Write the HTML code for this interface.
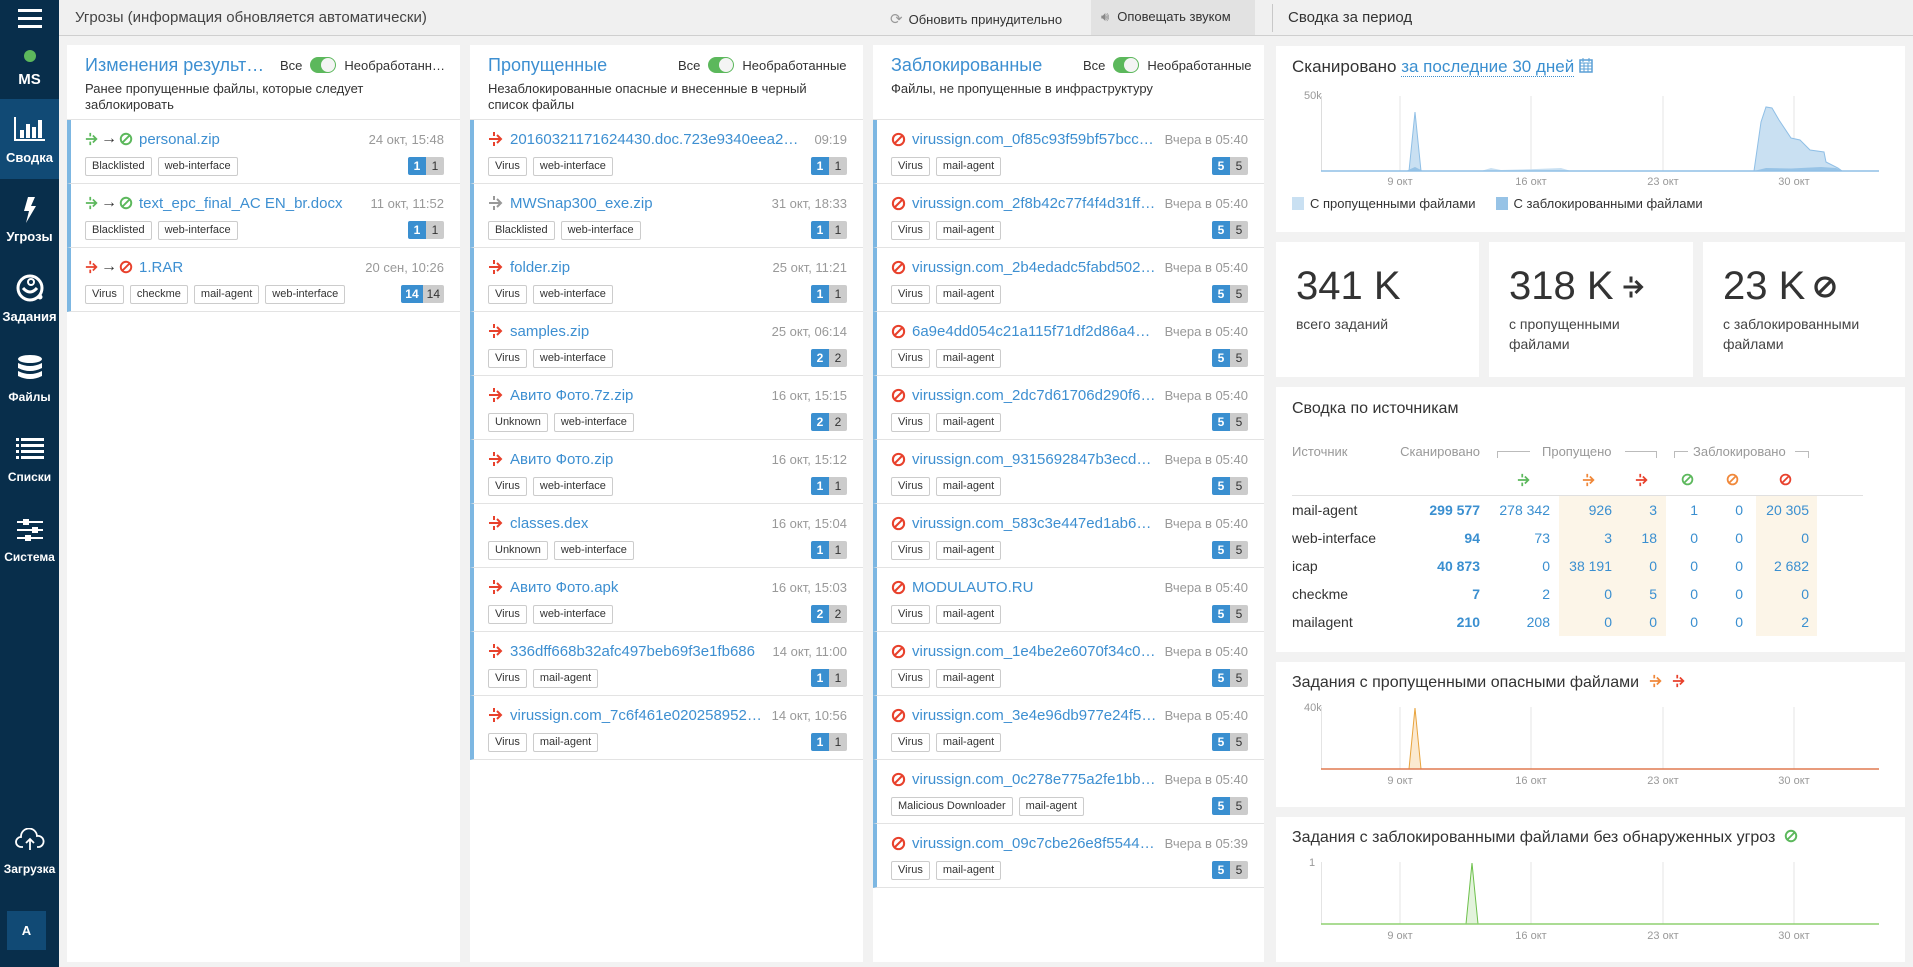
<!DOCTYPE html>
<html><head><meta charset="utf-8">
<style>
*{box-sizing:border-box;margin:0;padding:0}
body{width:1913px;height:967px;overflow:hidden;background:#f2f2f2;font-family:"Liberation Sans",sans-serif;position:relative;color:#333}
.abs{position:absolute}
#side{left:0;top:0;width:59px;height:967px;background:#082e4b;color:#fff;font-weight:bold;font-size:12px;text-align:center}
.nav{position:absolute;left:0;width:59px;text-align:center}
#hdr{left:59px;top:0;width:1854px;height:36px;background:#f0f0f0;border-bottom:1px solid #cfcfcf}
.col{background:#fff;top:45px;height:917px}
.ch{position:absolute;left:18px;top:10px;font-size:18px;color:#3d8fd1;white-space:nowrap;overflow:hidden;text-overflow:ellipsis}
.tg{position:absolute;top:12px;font-size:13px;color:#333;display:flex;align-items:center}
.sw{width:26px;height:16px;border-radius:8px;background:#5cb85c;margin:0 8px;position:relative}
.sw:after{content:"";position:absolute;right:1px;top:1px;width:14px;height:14px;border-radius:7px;background:#f4f4f4}
.desc{position:absolute;left:18px;top:36px;font-size:13px;line-height:16px;color:#333}
.list{position:absolute;left:0;right:0;top:74px;border-top:1px solid #e3e3e3}
.it{height:64px;border-bottom:1px solid #e3e3e3;border-left:4px solid #7db7e2;position:relative}
.r1{position:absolute;left:14px;right:16px;top:9px;height:20px;display:flex;align-items:center}
.nm{font-size:15px;color:#3d8fd1;white-space:nowrap;overflow:hidden;text-overflow:ellipsis;flex:1;margin-left:6px}
.tm{font-size:13px;color:#999;white-space:nowrap;margin-left:8px}
.r2{position:absolute;left:14px;right:16px;top:36px;height:20px;display:flex;align-items:center}
.tag{font-size:11px;border:1px solid #ccc;border-radius:2px;height:19px;line-height:17px;padding:0 6px;margin-right:6px;color:#333}
.bd{margin-left:auto;display:flex;font-size:12px;height:18px;line-height:18px;border-radius:2px;overflow:hidden}
.bd b{background:#3a8fd0;color:#fff;font-weight:bold;padding:0 4px;min-width:18px;text-align:center}
.bd i{background:#ccc;color:#333;font-style:normal;padding:0 4px;min-width:18px;text-align:center}
.card{background:#fff;position:absolute}
.ct{position:absolute;left:16px;font-size:16px;color:#333}
.xl{position:absolute;font-size:11px;color:#999;transform:translateX(-50%)}
.num{position:absolute;left:20px;top:22px;font-size:40px;color:#333;display:flex;align-items:center}
.stl{position:absolute;left:20px;top:72px;font-size:14px;line-height:20px;color:#444}
.row{position:absolute;left:1292px;height:28px;display:flex;align-items:center;font-size:14px}
.row span{display:block;text-align:right;color:#3a8fd0}
.row span:first-child{text-align:left;color:#333}
.ar{margin:0 2px;font-size:16px}
</style></head><body>
<svg width="0" height="0" style="position:absolute">
<defs>
<symbol id="pass" viewBox="0 0 16 16"><path d="M6 1v4M6 11v4" stroke="currentColor" stroke-width="2"/><path d="M1 8h12M9 4l4 4-4 4" stroke="currentColor" stroke-width="2" fill="none"/></symbol>
<symbol id="blk" viewBox="0 0 16 16"><circle cx="8" cy="8" r="6" stroke="currentColor" stroke-width="2.2" fill="none"/><path d="M4 12L12 4" stroke="currentColor" stroke-width="2.2"/></symbol>
</defs></svg>

<div id="side" class="abs">
 <div class="nav" style="top:9px"><div style="width:24px;height:3px;background:#fff;margin:0 auto 5px"></div><div style="width:24px;height:3px;background:#fff;margin:0 auto 5px"></div><div style="width:24px;height:3px;background:#fff;margin:0 auto"></div></div>
 <div class="nav" style="top:50px"><div style="width:12px;height:12px;border-radius:6px;background:#5cb85c;margin:0 auto"></div></div>
 <div class="nav" style="top:71px;font-size:15px">MS</div>
 <div class="nav" style="top:99px;height:80px;background:#114a75">
  <svg width="34" height="26" viewBox="0 0 34 26" style="margin-top:17px"><path d="M2 1v23h30" stroke="#fff" stroke-width="2" fill="none"/><rect x="7" y="14" width="4" height="8" fill="#fff"/><rect x="13" y="8" width="4" height="14" fill="#fff"/><rect x="19" y="11" width="4" height="11" fill="#fff"/><rect x="25" y="4" width="4" height="18" fill="#fff"/></svg>
  <div style="margin-top:5px;font-size:13px">Сводка</div></div>
 <div class="nav" style="top:197px"><svg width="14" height="26" viewBox="0 0 14 26"><path d="M5 0h7L8 9h5L3 26l3-12H1z" fill="#fff"/></svg></div>
 <div class="nav" style="top:229px;font-size:13px">Угрозы</div>
 <div class="nav" style="top:273px"><svg width="30" height="30" viewBox="0 0 30 30"><circle cx="15" cy="15" r="12" stroke="#fff" stroke-width="3" fill="none"/><circle cx="16" cy="9" r="3" stroke="#fff" stroke-width="2" fill="none"/><path d="M8 15q7 8 14 0" stroke="#fff" stroke-width="3" fill="none"/><circle cx="25" cy="24" r="2.5" fill="#fff"/></svg></div>
 <div class="nav" style="top:309px;font-size:13px">Задания</div>
 <div class="nav" style="top:355px"><svg width="26" height="26" viewBox="0 0 26 26"><ellipse cx="13" cy="4" rx="12" ry="4" fill="#fff"/><path d="M1 8q12 6 24 0v5q-12 6-24 0zM1 16q12 6 24 0v5q-12 6-24 0z" fill="#fff"/></svg></div>
 <div class="nav" style="top:390px;font-size:12px">Файлы</div>
 <div class="nav" style="top:437px"><svg width="30" height="22" viewBox="0 0 30 22"><g fill="#fff"><rect x="1" y="1" width="3" height="3"/><rect x="6" y="1" width="23" height="3"/><rect x="1" y="7" width="3" height="3"/><rect x="6" y="7" width="23" height="3"/><rect x="1" y="13" width="3" height="3"/><rect x="6" y="13" width="23" height="3"/><rect x="1" y="19" width="3" height="3"/><rect x="6" y="19" width="23" height="3"/></g></svg></div>
 <div class="nav" style="top:470px;font-size:12px">Списки</div>
 <div class="nav" style="top:519px"><svg width="26" height="22" viewBox="0 0 26 22"><g fill="#fff"><rect x="0" y="2" width="26" height="2"/><rect x="6" y="0" width="6" height="6"/><rect x="0" y="10" width="26" height="2"/><rect x="15" y="8" width="6" height="6"/><rect x="0" y="18" width="26" height="2"/><rect x="8" y="16" width="6" height="6"/></g></svg></div>
 <div class="nav" style="top:550px;font-size:12px">Система</div>
 <div class="nav" style="top:828px"><svg width="30" height="22" viewBox="0 0 30 22"><path d="M8 19H6a5 5 0 0 1 0-10 8 8 0 0 1 16-1 5 5 0 0 1 2 11h-2" stroke="#fff" stroke-width="1.8" fill="none"/><path d="M15 22V11M11 15l4-4 4 4" stroke="#fff" stroke-width="1.8" fill="none"/></svg></div>
 <div class="nav" style="top:862px;font-size:12px">Загрузка</div>
 <div class="abs" style="left:7px;top:911px;width:39px;height:39px;background:#114a75;line-height:39px;font-size:13px">A</div>
</div>

<div id="hdr" class="abs">
 <div class="abs" style="left:16px;top:9px;font-size:15px;color:#444">Угрозы (информация обновляется автоматически)</div>
 <div class="abs" style="left:831px;top:10px;font-size:13px;color:#333;display:flex;align-items:center"><span style="color:#999;font-size:15px;margin-right:6px">⟳</span>Обновить принудительно</div>
 <div class="abs" style="left:1032px;top:0;width:164px;height:35px;background:#e2e2e2;font-size:13px;line-height:34px;padding-left:10px"><span style="color:#888;margin-right:8px">🔊︎</span>Оповещать звуком</div>
 <div class="abs" style="left:1213px;top:4px;width:1px;height:28px;background:#c8c8c8"></div>
 <div class="abs" style="left:1229px;top:9px;font-size:15px;color:#333">Сводка за период</div>
</div>

<!-- col1 -->
<div class="abs col" style="left:67px;width:393px">
 <div class="ch" style="max-width:185px">Изменения результатов</div>
 <div class="tg" style="left:213px">Все<div class="sw"></div>Необработанн…</div>
 <div class="desc">Ранее пропущенные файлы, которые следует<br>заблокировать</div>
 <div class="list">
  <div class="it"><div class="r1"><svg width="14" height="14" style="color:#5cb85c"><use href="#pass"/></svg><span class="ar">→</span><svg width="14" height="14" style="color:#5cb85c"><use href="#blk"/></svg><span class="nm">personal.zip</span><span class="tm">24 окт, 15:48</span></div><div class="r2"><span class="tag">Blacklisted</span><span class="tag">web-interface</span><span class="bd"><b>1</b><i>1</i></span></div></div>
  <div class="it"><div class="r1"><svg width="14" height="14" style="color:#5cb85c"><use href="#pass"/></svg><span class="ar">→</span><svg width="14" height="14" style="color:#5cb85c"><use href="#blk"/></svg><span class="nm">text_epc_final_AC EN_br.docx</span><span class="tm">11 окт, 11:52</span></div><div class="r2"><span class="tag">Blacklisted</span><span class="tag">web-interface</span><span class="bd"><b>1</b><i>1</i></span></div></div>
  <div class="it"><div class="r1"><svg width="14" height="14" style="color:#e8412c"><use href="#pass"/></svg><span class="ar">→</span><svg width="14" height="14" style="color:#e8412c"><use href="#blk"/></svg><span class="nm">1.RAR</span><span class="tm">20 сен, 10:26</span></div><div class="r2"><span class="tag">Virus</span><span class="tag">checkme</span><span class="tag">mail-agent</span><span class="tag">web-interface</span><span class="bd"><b>14</b><i>14</i></span></div></div>
 </div>
</div>

<!-- col2 -->
<div class="abs col" style="left:470px;width:393px">
 <div class="ch">Пропущенные</div>
 <div class="tg" style="left:208px">Все<div class="sw"></div>Необработанные</div>
 <div class="desc">Незаблокированные опасные и внесенные в черный<br>список файлы</div>
 <div class="list">
  <div class="it"><div class="r1"><svg width="16" height="16" style="color:#e8412c"><use href="#pass"/></svg><span class="nm">20160321171624430.doc.723e9340eea20…</span><span class="tm">09:19</span></div><div class="r2"><span class="tag">Virus</span><span class="tag">web-interface</span><span class="bd"><b>1</b><i>1</i></span></div></div>
  <div class="it"><div class="r1"><svg width="16" height="16" style="color:#999"><use href="#pass"/></svg><span class="nm">MWSnap300_exe.zip</span><span class="tm">31 окт, 18:33</span></div><div class="r2"><span class="tag">Blacklisted</span><span class="tag">web-interface</span><span class="bd"><b>1</b><i>1</i></span></div></div>
  <div class="it"><div class="r1"><svg width="16" height="16" style="color:#e8412c"><use href="#pass"/></svg><span class="nm">folder.zip</span><span class="tm">25 окт, 11:21</span></div><div class="r2"><span class="tag">Virus</span><span class="tag">web-interface</span><span class="bd"><b>1</b><i>1</i></span></div></div>
  <div class="it"><div class="r1"><svg width="16" height="16" style="color:#e8412c"><use href="#pass"/></svg><span class="nm">samples.zip</span><span class="tm">25 окт, 06:14</span></div><div class="r2"><span class="tag">Virus</span><span class="tag">web-interface</span><span class="bd"><b>2</b><i>2</i></span></div></div>
  <div class="it"><div class="r1"><svg width="16" height="16" style="color:#e8412c"><use href="#pass"/></svg><span class="nm">Авито Фото.7z.zip</span><span class="tm">16 окт, 15:15</span></div><div class="r2"><span class="tag">Unknown</span><span class="tag">web-interface</span><span class="bd"><b>2</b><i>2</i></span></div></div>
  <div class="it"><div class="r1"><svg width="16" height="16" style="color:#e8412c"><use href="#pass"/></svg><span class="nm">Авито Фото.zip</span><span class="tm">16 окт, 15:12</span></div><div class="r2"><span class="tag">Virus</span><span class="tag">web-interface</span><span class="bd"><b>1</b><i>1</i></span></div></div>
  <div class="it"><div class="r1"><svg width="16" height="16" style="color:#e8412c"><use href="#pass"/></svg><span class="nm">classes.dex</span><span class="tm">16 окт, 15:04</span></div><div class="r2"><span class="tag">Unknown</span><span class="tag">web-interface</span><span class="bd"><b>1</b><i>1</i></span></div></div>
  <div class="it"><div class="r1"><svg width="16" height="16" style="color:#e8412c"><use href="#pass"/></svg><span class="nm">Авито Фото.apk</span><span class="tm">16 окт, 15:03</span></div><div class="r2"><span class="tag">Virus</span><span class="tag">web-interface</span><span class="bd"><b>2</b><i>2</i></span></div></div>
  <div class="it"><div class="r1"><svg width="16" height="16" style="color:#e8412c"><use href="#pass"/></svg><span class="nm">336dff668b32afc497beb69f3e1fb686</span><span class="tm">14 окт, 11:00</span></div><div class="r2"><span class="tag">Virus</span><span class="tag">mail-agent</span><span class="bd"><b>1</b><i>1</i></span></div></div>
  <div class="it"><div class="r1"><svg width="16" height="16" style="color:#e8412c"><use href="#pass"/></svg><span class="nm">virussign.com_7c6f461e020258952…</span><span class="tm">14 окт, 10:56</span></div><div class="r2"><span class="tag">Virus</span><span class="tag">mail-agent</span><span class="bd"><b>1</b><i>1</i></span></div></div>
 </div>
</div>

<!-- col3 -->
<div class="abs col" style="left:873px;width:391px">
 <div class="ch">Заблокированные</div>
 <div class="tg" style="left:210px">Все<div class="sw"></div>Необработанные</div>
 <div class="desc">Файлы, не пропущенные в инфраструктуру</div>
 <div class="list">
  <div class="it"><div class="r1"><svg width="15" height="15" style="color:#e8412c"><use href="#blk"/></svg><span class="nm">virussign.com_0f85c93f59bf57bcc…</span><span class="tm">Вчера в 05:40</span></div><div class="r2"><span class="tag">Virus</span><span class="tag">mail-agent</span><span class="bd"><b>5</b><i>5</i></span></div></div>
  <div class="it"><div class="r1"><svg width="15" height="15" style="color:#e8412c"><use href="#blk"/></svg><span class="nm">virussign.com_2f8b42c77f4f4d31ff…</span><span class="tm">Вчера в 05:40</span></div><div class="r2"><span class="tag">Virus</span><span class="tag">mail-agent</span><span class="bd"><b>5</b><i>5</i></span></div></div>
  <div class="it"><div class="r1"><svg width="15" height="15" style="color:#e8412c"><use href="#blk"/></svg><span class="nm">virussign.com_2b4edadc5fabd502a…</span><span class="tm">Вчера в 05:40</span></div><div class="r2"><span class="tag">Virus</span><span class="tag">mail-agent</span><span class="bd"><b>5</b><i>5</i></span></div></div>
  <div class="it"><div class="r1"><svg width="15" height="15" style="color:#e8412c"><use href="#blk"/></svg><span class="nm">6a9e4dd054c21a115f71df2d86a47…</span><span class="tm">Вчера в 05:40</span></div><div class="r2"><span class="tag">Virus</span><span class="tag">mail-agent</span><span class="bd"><b>5</b><i>5</i></span></div></div>
  <div class="it"><div class="r1"><svg width="15" height="15" style="color:#e8412c"><use href="#blk"/></svg><span class="nm">virussign.com_2dc7d61706d290f6…</span><span class="tm">Вчера в 05:40</span></div><div class="r2"><span class="tag">Virus</span><span class="tag">mail-agent</span><span class="bd"><b>5</b><i>5</i></span></div></div>
  <div class="it"><div class="r1"><svg width="15" height="15" style="color:#e8412c"><use href="#blk"/></svg><span class="nm">virussign.com_9315692847b3ecda…</span><span class="tm">Вчера в 05:40</span></div><div class="r2"><span class="tag">Virus</span><span class="tag">mail-agent</span><span class="bd"><b>5</b><i>5</i></span></div></div>
  <div class="it"><div class="r1"><svg width="15" height="15" style="color:#e8412c"><use href="#blk"/></svg><span class="nm">virussign.com_583c3e447ed1ab6b…</span><span class="tm">Вчера в 05:40</span></div><div class="r2"><span class="tag">Virus</span><span class="tag">mail-agent</span><span class="bd"><b>5</b><i>5</i></span></div></div>
  <div class="it"><div class="r1"><svg width="15" height="15" style="color:#e8412c"><use href="#blk"/></svg><span class="nm">MODULAUTO.RU</span><span class="tm">Вчера в 05:40</span></div><div class="r2"><span class="tag">Virus</span><span class="tag">mail-agent</span><span class="bd"><b>5</b><i>5</i></span></div></div>
  <div class="it"><div class="r1"><svg width="15" height="15" style="color:#e8412c"><use href="#blk"/></svg><span class="nm">virussign.com_1e4be2e6070f34c00…</span><span class="tm">Вчера в 05:40</span></div><div class="r2"><span class="tag">Virus</span><span class="tag">mail-agent</span><span class="bd"><b>5</b><i>5</i></span></div></div>
  <div class="it"><div class="r1"><svg width="15" height="15" style="color:#e8412c"><use href="#blk"/></svg><span class="nm">virussign.com_3e4e96db977e24f5e…</span><span class="tm">Вчера в 05:40</span></div><div class="r2"><span class="tag">Virus</span><span class="tag">mail-agent</span><span class="bd"><b>5</b><i>5</i></span></div></div>
  <div class="it"><div class="r1"><svg width="15" height="15" style="color:#e8412c"><use href="#blk"/></svg><span class="nm">virussign.com_0c278e775a2fe1bbd…</span><span class="tm">Вчера в 05:40</span></div><div class="r2"><span class="tag">Malicious Downloader</span><span class="tag">mail-agent</span><span class="bd"><b>5</b><i>5</i></span></div></div>
  <div class="it"><div class="r1"><svg width="15" height="15" style="color:#e8412c"><use href="#blk"/></svg><span class="nm">virussign.com_09c7cbe26e8f5544b…</span><span class="tm">Вчера в 05:39</span></div><div class="r2"><span class="tag">Virus</span><span class="tag">mail-agent</span><span class="bd"><b>5</b><i>5</i></span></div></div>
 </div>
</div>

<!-- right: card1 -->
<div class="card" style="left:1276px;top:46px;width:629px;height:186px">
 <div class="ct" style="top:11px;font-size:17px">Сканировано <span style="color:#3a8fd0;border-bottom:1px dotted #3a8fd0">за последние 30 дней</span> <svg width="14" height="15" viewBox="0 0 14 15" style="vertical-align:-1px"><rect x="1" y="2" width="12" height="12" fill="none" stroke="#5a9fd6" stroke-width="1.5"/><path d="M1 5h12M4 0v4M10 0v4M1 8h12M1 11h12M5 5v9M9 5v9" stroke="#5a9fd6" stroke-width="1"/></svg></div>
 <div class="abs" style="left:28px;top:44px;font-size:11px;color:#999">50k</div>
 <svg class="abs" style="left:45px;top:50px" width="560" height="76" viewBox="0 0 560 76">
  <g stroke="#e4e4e4" stroke-width="1"><path d="M79 0v75M210 0v75M342 0v75M473 0v75"/></g>
  <path d="M0.5 0v75" stroke="#ddd"/>
  <path d="M0 75L88 75L94 16L100 75L433 75L440 26L445 11L451 12L458 24L470 42L479 44L489 54L503 56L505 66L517 72L521 75L558 75Z" fill="#c9e0f2" stroke="#8fbfe6" stroke-width="1"/>
  <path d="M160 75L170 72L180 74L215 73L240 72L250 75Z" fill="#c9e0f2"/>
  <path d="M85 75L94 71L102 75ZM433 75L445 72L470 72.5L500 71L515 72L522 75Z" fill="#97c3e6"/>
  <path d="M0 75H558" stroke="#8fbfe6" stroke-width="1.5"/>
 </svg>
 <div class="xl" style="left:124px;top:130px">9 окт</div><div class="xl" style="left:255px;top:130px">16 окт</div><div class="xl" style="left:387px;top:130px">23 окт</div><div class="xl" style="left:518px;top:130px">30 окт</div>
 <div class="abs" style="left:16px;top:150px;font-size:13px;color:#333;display:flex;align-items:center"><span style="width:12px;height:13px;background:#c9e0f2;margin-right:6px"></span>С пропущенными файлами<span style="width:12px;height:13px;background:#97c3e6;margin:0 6px 0 20px"></span>С заблокированными файлами</div>
</div>

<div class="card" style="left:1276px;top:242px;width:203px;height:135px"><div class="num">341 K</div><div class="stl">всего заданий</div></div>
<div class="card" style="left:1489px;top:242px;width:204px;height:135px"><div class="num">318 K <svg width="24" height="24" style="margin-left:8px;color:#333"><use href="#pass"/></svg></div><div class="stl">с пропущенными<br>файлами</div></div>
<div class="card" style="left:1703px;top:242px;width:202px;height:135px"><div class="num">23 K <svg width="24" height="24" style="margin-left:8px;color:#333"><use href="#blk"/></svg></div><div class="stl">с заблокированными<br>файлами</div></div>

<!-- sources -->
<div class="card" style="left:1276px;top:387px;width:629px;height:265px"><div class="ct" style="top:13px">Сводка по источникам</div></div>
<div class="abs" style="left:1559px;top:496px;width:107px;height:140px;background:#fcf5e8"></div>
<div class="abs" style="left:1756px;top:496px;width:61px;height:140px;background:#fcf5e8"></div>
<div class="abs" style="left:1292px;top:444px;font-size:13px;color:#999">Источник</div>
<div class="abs" style="left:1380px;top:444px;width:100px;text-align:right;font-size:13px;color:#999">Сканировано</div>
<div class="abs" style="left:1497px;top:451px;width:33px;height:7px;border-top:1px solid #bbb;border-left:1px solid #bbb"></div>
<div class="abs" style="left:1542px;top:444px;font-size:13px;color:#999">Пропущено</div>
<div class="abs" style="left:1625px;top:451px;width:32px;height:7px;border-top:1px solid #bbb;border-right:1px solid #bbb"></div>
<div class="abs" style="left:1674px;top:451px;width:14px;height:7px;border-top:1px solid #bbb;border-left:1px solid #bbb"></div>
<div class="abs" style="left:1693px;top:444px;font-size:13px;color:#999">Заблокировано</div>
<div class="abs" style="left:1795px;top:451px;width:14px;height:7px;border-top:1px solid #bbb;border-right:1px solid #bbb"></div>
<svg class="abs" style="left:1517px;top:473px;color:#5cb85c" width="14" height="14"><use href="#pass"/></svg>
<svg class="abs" style="left:1582px;top:473px;color:#f0883a" width="14" height="14"><use href="#pass"/></svg>
<svg class="abs" style="left:1635px;top:473px;color:#e8412c" width="14" height="14"><use href="#pass"/></svg>
<svg class="abs" style="left:1681px;top:473px;color:#5cb85c" width="13" height="13"><use href="#blk"/></svg>
<svg class="abs" style="left:1726px;top:473px;color:#f0883a" width="13" height="13"><use href="#blk"/></svg>
<svg class="abs" style="left:1779px;top:473px;color:#e8412c" width="13" height="13"><use href="#blk"/></svg>
<div class="abs" style="left:1292px;top:495px;width:571px;height:1px;background:#e0e0e0"></div>
<div class="row" style="top:496px"><span style="width:100px">mail-agent</span><span style="width:88px;font-weight:bold">299 577</span><span style="width:70px">278 342</span><span style="width:62px">926</span><span style="width:45px">3</span><span style="width:41px">1</span><span style="width:45px">0</span><span style="width:66px">20 305</span></div>
<div class="row" style="top:524px"><span style="width:100px">web-interface</span><span style="width:88px;font-weight:bold">94</span><span style="width:70px">73</span><span style="width:62px">3</span><span style="width:45px">18</span><span style="width:41px">0</span><span style="width:45px">0</span><span style="width:66px">0</span></div>
<div class="row" style="top:552px"><span style="width:100px">icap</span><span style="width:88px;font-weight:bold">40 873</span><span style="width:70px">0</span><span style="width:62px">38 191</span><span style="width:45px">0</span><span style="width:41px">0</span><span style="width:45px">0</span><span style="width:66px">2 682</span></div>
<div class="row" style="top:580px"><span style="width:100px">checkme</span><span style="width:88px;font-weight:bold">7</span><span style="width:70px">2</span><span style="width:62px">0</span><span style="width:45px">5</span><span style="width:41px">0</span><span style="width:45px">0</span><span style="width:66px">0</span></div>
<div class="row" style="top:608px"><span style="width:100px">mailagent</span><span style="width:88px;font-weight:bold">210</span><span style="width:70px">208</span><span style="width:62px">0</span><span style="width:45px">0</span><span style="width:41px">0</span><span style="width:45px">0</span><span style="width:66px">2</span></div>

<!-- chart3 -->
<div class="card" style="left:1276px;top:662px;width:629px;height:145px">
 <div class="ct" style="top:12px">Задания с пропущенными опасными файлами <svg width="14" height="14" style="color:#f0883a;margin-left:6px;vertical-align:-1px"><use href="#pass"/></svg> <svg width="14" height="14" style="color:#e8412c;margin-left:4px;vertical-align:-1px"><use href="#pass"/></svg></div>
 <div class="abs" style="left:28px;top:40px;font-size:11px;color:#999">40k</div>
 <svg class="abs" style="left:45px;top:45px" width="560" height="63" viewBox="0 0 560 63">
  <g stroke="#e4e4e4"><path d="M79 0v62M210 0v62M342 0v62M473 0v62M0.5 0v62"/></g>
  <path d="M88 62L94 1L100 62Z" fill="#fbe9d0" stroke="#e8a33c"/>
  <path d="M0 62H558" stroke="#e07a50" stroke-width="1.5"/>
 </svg>
 <div class="xl" style="left:124px;top:113px">9 окт</div><div class="xl" style="left:255px;top:113px">16 окт</div><div class="xl" style="left:387px;top:113px">23 окт</div><div class="xl" style="left:518px;top:113px">30 окт</div>
</div>

<!-- chart4 -->
<div class="card" style="left:1276px;top:817px;width:629px;height:145px">
 <div class="ct" style="top:12px">Задания с заблокированными файлами без обнаруженных угроз <svg width="14" height="14" style="color:#5cb85c;margin-left:4px;vertical-align:-1px"><use href="#blk"/></svg></div>
 <div class="abs" style="left:33px;top:40px;font-size:11px;color:#999">1</div>
 <svg class="abs" style="left:45px;top:45px" width="560" height="63" viewBox="0 0 560 63">
  <g stroke="#e4e4e4"><path d="M79 0v62M210 0v62M342 0v62M473 0v62M0.5 0v62"/></g>
  <path d="M145 62L151 1L157 62Z" fill="#e3f3dc" stroke="#6cc04a"/>
  <path d="M0 62H558" stroke="#8fd070" stroke-width="1.5"/>
 </svg>
 <div class="xl" style="left:124px;top:113px">9 окт</div><div class="xl" style="left:255px;top:113px">16 окт</div><div class="xl" style="left:387px;top:113px">23 окт</div><div class="xl" style="left:518px;top:113px">30 окт</div>
</div>
</body></html>
